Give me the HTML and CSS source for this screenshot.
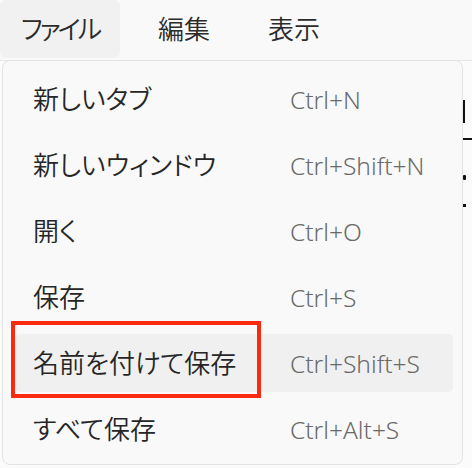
FILE: index.html
```html
<!DOCTYPE html>
<html lang="ja">
<head>
    <meta charset="UTF-8">
    <title>ファイル メニュー</title>
    <link rel="stylesheet" href="styles.css">
</head>
<body>

<div class="menubar">
    <div class="menubar-item active">ファイル</div>
    <div class="menubar-item">編集</div>
    <div class="menubar-item">表示</div>
</div>

<div class="document">
    <span class="mark mark-glyph"></span>
    <span class="mark mark-rule"></span>
    <span class="mark mark-comma"></span>
    <span class="mark mark-dot"></span>
</div>

<div class="menu">
    <div class="menu-item">
        <span class="label">新しいタブ</span>
        <span class="shortcut">Ctrl+N</span>
    </div>
    <div class="menu-item">
        <span class="label">新しいウィンドウ</span>
        <span class="shortcut">Ctrl+Shift+N</span>
    </div>
    <div class="menu-item">
        <span class="label">開く</span>
        <span class="shortcut">Ctrl+O</span>
    </div>
    <div class="menu-item">
        <span class="label">保存</span>
        <span class="shortcut">Ctrl+S</span>
    </div>
    <div class="menu-item hover">
        <span class="label">名前を付けて保存</span>
        <span class="shortcut">Ctrl+Shift+S</span>
        <div class="callout"></div>
    </div>
    <div class="menu-item">
        <span class="label">すべて保存</span>
        <span class="shortcut">Ctrl+Alt+S</span>
    </div>
</div>

</body>
</html>
```

FILE: styles.css
```css
body {
    margin: 0;
    background-color: #fbfbfb;
    font-family: "Noto Sans", "Noto Sans CJK JP", sans-serif;
    color: #1b1b1b;
    position: relative;
    height: 468px;
    overflow: hidden;
}

.menubar {
    display: flex;
    gap: 18px;
    height: 60px;
    background-color: #f9f9f9;
    border-bottom: 1px solid #e5e5e5;
}

.menubar-item {
    height: 58px;
    line-height: 58px;
    padding: 0 20px;
    font-size: 26px;
    font-weight: 350;
    font-feature-settings: "palt";
    border-radius: 6px;
    color: #2b2b2b;
}

.menubar-item.active {
    background-color: #f1f1f1;
    letter-spacing: -3px;
    padding-left: 21px;
    padding-right: 21px;
}

.document {
    display: flex;
    flex-direction: column;
    align-items: flex-start;
    padding: 37px 0 0 463px;
}

.mark {
    display: block;
    background-color: #111;
}

.mark-glyph {
    width: 2px;
    height: 18px;
    border-top: 3px solid #111;
    border-bottom: 2px solid #111;
    margin-top: 2px;
}

.mark-rule {
    width: 10px;
    height: 2px;
    margin-top: 15px;
}

.mark-comma {
    width: 3px;
    height: 5px;
    margin-top: 35px;
    border-radius: 1px;
}

.mark-dot {
    width: 3px;
    height: 3px;
    margin-top: 24px;
}

/* dropdown lies over the document */
.menu {
    position: absolute;
    top: 60px;
    left: 2px;
    box-sizing: border-box;
    width: 461px;
    height: 405px;
    padding-top: 9px;
    display: flex;
    flex-direction: column;
    gap: 8px;
    background-color: #f9f9f9;
    border: 1px solid #e3e3e3;
    border-radius: 8px;
}

.menu-item {
    position: relative;
    display: flex;
    align-items: baseline;
    flex-shrink: 0;
    height: 58px;
    line-height: 58px;
    margin: 0 9px 0 12px;
    padding: 0 18px;
    border-radius: 5px;
}

.menu-item.hover {
    background-color: #f0f0f0;
}

.label {
    width: 257px;
    font-size: 26px;
    font-weight: 350;
    font-feature-settings: "palt";
    color: #262626;
}

.shortcut {
    font-size: 24.5px;
    font-weight: 300;
    color: #6a6a6a;
}

.callout {
    position: absolute;
    top: -13px;
    left: -4px;
    width: 242px;
    height: 69px;
    border: 4px solid #fa2a10;
}
```
